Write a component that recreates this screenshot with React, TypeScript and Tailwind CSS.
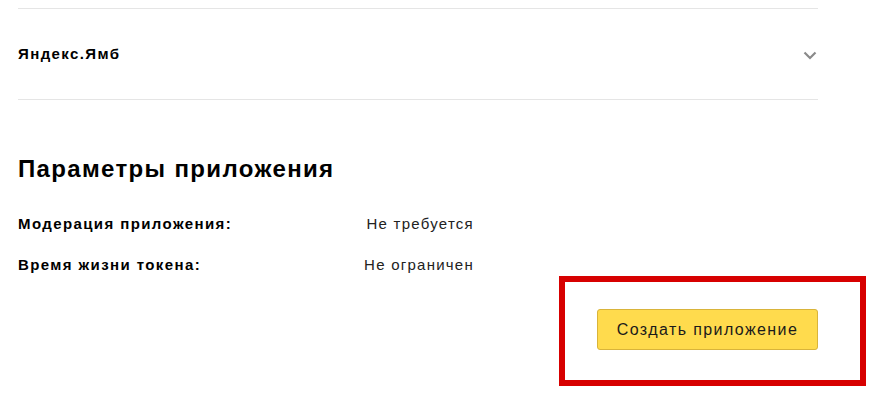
import React from 'react';

const params = [
  { label: 'Модерация приложения:', value: 'Не требуется' },
  { label: 'Время жизни токена:', value: 'Не ограничен' },
];

export default function App() {
  return (
    <div
      className="relative w-[878px] h-[408px] overflow-hidden bg-white text-black"
      style={{ fontFamily: '"Liberation Sans", Arial, sans-serif' }}
    >
      <div className="pl-[18px] pt-[8px] w-[818px]">
        {/* Platform accordion */}
        <div className="border-t border-b border-[#e5e5e5] h-[92px] flex items-center justify-between">
          <span className="text-[15px] font-bold leading-5 tracking-[1.4px]">Яндекс.Ямб</span>
          <svg width="14" height="9" viewBox="0 0 14 9" className="mr-[1px] mt-[2px]">
            <path d="M1.5 1.5 L7 7 L12.5 1.5" fill="none" stroke="#8a8a8a" strokeWidth="2.2" />
          </svg>
        </div>

        {/* App params */}
        <h2 className="mt-[55px] text-[24px] font-bold leading-[28px] tracking-[1.35px]">Параметры приложения</h2>
        <div className="mt-[31px] w-[456px] flex flex-col gap-[21px]">
          {params.map((p) => (
            <div key={p.label} className="flex justify-between text-[15px] leading-5">
              <span className="font-bold tracking-[1.4px]">{p.label}</span>
              <span className="text-[#222] tracking-[1.25px]">{p.value}</span>
            </div>
          ))}
        </div>

        <div className="mt-[34px] flex justify-end">
          <button className="w-[221px] h-[41px] bg-[#ffdb4d] border border-[#d9b43a] rounded-[3px] text-[16px] text-[#1a1a1a] tracking-[1.4px]">
            Создать приложение
          </button>
        </div>
      </div>

      {/* annotation frame */}
      <div className="absolute left-[559px] top-[276px] w-[307px] h-[110px] border-[6px] border-[#d70000]" />
    </div>
  );
}
